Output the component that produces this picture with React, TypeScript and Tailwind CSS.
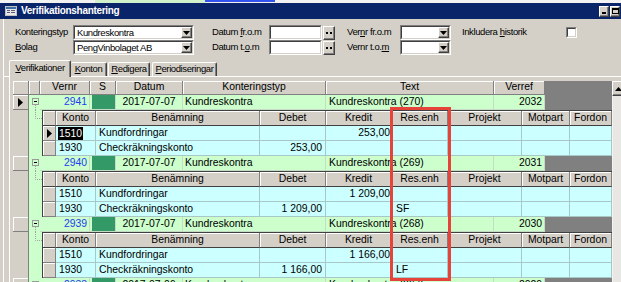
import React from "react";

type SubRow = { konto: string; ben: string; debet: string; kredit: string; res: string };
type Block = { vernr: string; datum: string; typ: string; text: string; verref: string; rows: SubRow[]; sel?: boolean };

const blocks: Block[] = [
  {
    vernr: "2941", datum: "2017-07-07", typ: "Kundreskontra", text: "Kundreskontra (270)", verref: "2032", sel: true,
    rows: [
      { konto: "1510", ben: "Kundfordringar", debet: "", kredit: "253,00", res: "" },
      { konto: "1930", ben: "Checkräkningskonto", debet: "253,00", kredit: "", res: "" },
    ],
  },
  {
    vernr: "2940", datum: "2017-07-07", typ: "Kundreskontra", text: "Kundreskontra (269)", verref: "2031",
    rows: [
      { konto: "1510", ben: "Kundfordringar", debet: "", kredit: "1 209,00", res: "" },
      { konto: "1930", ben: "Checkräkningskonto", debet: "1 209,00", kredit: "", res: "SF" },
    ],
  },
  {
    vernr: "2939", datum: "2017-07-07", typ: "Kundreskontra", text: "Kundreskontra (268)", verref: "2030",
    rows: [
      { konto: "1510", ben: "Kundfordringar", debet: "", kredit: "1 166,00", res: "" },
      { konto: "1930", ben: "Checkräkningskonto", debet: "1 166,00", kredit: "", res: "LF" },
    ],
  },
  {
    vernr: "2938", datum: "2017-07-06", typ: "Kundreskontra", text: "Kundreskontra (267)", verref: "2029",
    rows: [
      { konto: "1510", ben: "Kundfordringar", debet: "", kredit: "980,00", res: "" },
      { konto: "1930", ben: "Checkräkningskonto", debet: "980,00", kredit: "", res: "" },
    ],
  },
];

const raised =
  "bg-[#d4d0c8] border border-t-white border-l-white border-b-[#404040] border-r-[#404040] shadow-[inset_-1px_-1px_0_#808080]";
const hdr =
  "shrink-0 h-full flex items-center bg-[#d4d0c8] border-r border-b border-[#808080] shadow-[inset_1px_1px_0_#ffffff] overflow-hidden whitespace-nowrap";
const selCell =
  "shrink-0 h-full flex items-center bg-[#d4d0c8] border-r border-b border-[#808080] shadow-[inset_1px_1px_0_#ffffff]";
const cellG =
  "shrink-0 h-full flex items-center bg-[#ccffcc] border-r border-b border-[#c4dcc4] overflow-hidden whitespace-nowrap";
const cellC =
  "shrink-0 h-full flex items-center bg-[#ccffff] border-r border-b border-[#a8c8c8] overflow-hidden whitespace-nowrap";

function DownArrow() {
  return (
    <svg width="7" height="4" viewBox="0 0 7 4">
      <path d="M0 0h7L3.5 4z" fill="#000" />
    </svg>
  );
}

function RightArrow() {
  return (
    <svg width="5" height="9" viewBox="0 0 5 9">
      <path d="M0 0L5 4.5L0 9z" fill="#000" />
    </svg>
  );
}

function Combo({ w, text }: { w: string; text?: string }) {
  return (
    <div className={`${w} shrink-0 h-[15px] flex border border-t-[#808080] border-l-[#808080] border-b-white border-r-white`}>
      <div className="flex-1 min-w-0 flex items-center bg-white border border-t-[#404040] border-l-[#404040] border-b-[#d4d0c8] border-r-[#d4d0c8]">
        <span className="pl-[2px] flex-1 min-w-0 whitespace-nowrap overflow-hidden leading-[11px] h-[11px]">{text}</span>
        <div className={`w-[11px] h-[11px] shrink-0 flex items-center justify-center ${raised}`}>
          <DownArrow />
        </div>
      </div>
    </div>
  );
}

function DateInput() {
  return (
    <div className="flex items-center shrink-0">
      <div className="w-[53px] h-[15px] flex border border-t-[#808080] border-l-[#808080] border-b-white border-r-white">
        <div className="flex-1 bg-white border border-t-[#404040] border-l-[#404040] border-b-[#d4d0c8] border-r-[#d4d0c8]" />
      </div>
      <div className={`ml-[1px] w-[12px] h-[14px] flex items-center justify-center ${raised}`}>
        <svg width="6" height="2" viewBox="0 0 6 2">
          <rect x="0" y="0" width="2" height="2" fill="#000" />
          <rect x="4" y="0" width="2" height="2" fill="#000" />
        </svg>
      </div>
    </div>
  );
}

function Checkbox() {
  return (
    <div className="w-[11px] h-[11px] shrink-0 border border-t-[#808080] border-l-[#808080] border-b-white border-r-white">
      <div className="w-full h-full bg-white border border-t-[#404040] border-l-[#404040] border-b-[#d4d0c8] border-r-[#d4d0c8]" />
    </div>
  );
}

const mainW = ["w-[50px]", "w-[26px]", "w-[67px]", "w-[143px]", "w-[168px]", "w-[51px]"];
const mainHeads = ["Vernr", "S", "Datum", "Konteringstyp", "Text", "Verref"];
const subW = ["w-[40px]", "w-[164px]", "w-[66px]", "w-[66px]", "w-[56px]", "w-[74px]", "w-[48px]", "flex-1"];
const subHeads = ["Konto", "Benämning", "Debet", "Kredit", "Res.enh", "Projekt", "Motpart", "Fordon"];

function BlockView({ b }: { b: Block }) {
  return (
    <div className="flex flex-col">
      {/* main row */}
      <div className="flex h-[15px]">
        <div className={`w-[16px] justify-center ${selCell}`}>{b.sel && <RightArrow />}</div>
        <div className="w-[11px] shrink-0 h-full bg-[#ccffcc]">
          <svg width="11" height="15" viewBox="0 0 11 15">
            <rect x="3.5" y="3.5" width="6" height="6" fill="none" stroke="#9a9a9a" />
            <path d="M5 6.5h3" stroke="#000" />
            <path d="M6.5 10v5" stroke="#a0a0a0" strokeDasharray="1 1" />
          </svg>
        </div>
        <div className={`${mainW[0]} ${cellG} justify-end pr-[2px] text-[#1e3cf0]`}>{b.vernr}</div>
        <div className={`${mainW[1]} ${cellG} pl-[2px]`}>
          <div className="w-full h-[14px] bg-[#339966]" />
        </div>
        <div className={`${mainW[2]} ${cellG} justify-center`}>{b.datum}</div>
        <div className={`${mainW[3]} ${cellG} pl-[2px]`}>{b.typ}</div>
        <div className={`${mainW[4]} ${cellG} pl-[3px]`}>{b.text}</div>
        <div className={`${mainW[5]} ${cellG} justify-end pr-[2px]`}>{b.verref}</div>
        <div className="flex-1 bg-[#808080]" />
      </div>
      {/* sub area */}
      <div className="flex h-[46px]">
        <div className="w-[16px] shrink-0 bg-[#d4d0c8] border-r border-[#808080]" />
        <div className="w-[13px] shrink-0 bg-[#ccffcc]">
          <svg width="13" height="46" viewBox="0 0 13 46">
            <path d="M6.5 0v8.5H13" fill="none" stroke="#a0a0a0" strokeDasharray="1 1" />
          </svg>
        </div>
        <div className="w-[570px] shrink-0 flex flex-col border-l border-t border-[#404040]">
          <div className="flex h-[15px]">
            <div className={`w-[13px] ${hdr} border-b-[#404040]`} />
            {subHeads.map((h, i) => (
              <div key={h} className={`${subW[i]} ${hdr} border-b-[#404040] justify-center`}>{h}</div>
            ))}
          </div>
          {b.rows.map((r, ri) => (
            <div key={ri} className="flex h-[15px]">
              <div className={`w-[13px] justify-center ${selCell}`}>{b.sel && ri === 0 && <RightArrow />}</div>
              <div className={`${subW[0]} ${cellC} pl-[2px]`}>
                {b.sel && ri === 0 ? (
                  <span className="bg-black text-white px-[1px] leading-[13px]">{r.konto}</span>
                ) : (
                  <span className="pl-[1px]">{r.konto}</span>
                )}
              </div>
              <div className={`${subW[1]} ${cellC} pl-[3px]`}>{r.ben}</div>
              <div className={`${subW[2]} ${cellC} justify-end pr-[3px]`}>{r.debet}</div>
              <div className={`${subW[3]} ${cellC} justify-end pr-[1px]`}>{r.kredit}</div>
              <div className={`${subW[4]} ${cellC} pl-[4px]`}>{r.res}</div>
              <div className={`${subW[5]} ${cellC}`} />
              <div className={`${subW[6]} ${cellC}`} />
              <div className={`${subW[7]} ${cellC}`} />
            </div>
          ))}
        </div>
      </div>
    </div>
  );
}

export default function App() {
  return (
    <div className="w-[621px] h-[282px] overflow-hidden relative bg-[#d4d0c8] font-['Liberation_Sans',Arial,sans-serif] text-black select-none">
      {/* background strip above window */}
      <div className="h-[3px] flex">
        <div className="w-[95px] bg-[#f2f2f2]" />
        <div className="w-[110px] bg-[#d2f2cc]" />
        <div className="w-[70px] bg-[#f2f2f2] border-t-2 border-[#3355ee]" />
        <div className="flex-1 bg-[#f2f2f2]" />
      </div>
      {/* title bar */}
      <div className="h-[16px] bg-[#0a246a] flex items-center">
        <div className="ml-[5px] w-[12px] h-[10px] shrink-0">
          <svg width="12" height="10" viewBox="0 0 12 10">
            <rect x="0.5" y="0.5" width="11" height="9" fill="#e8e8e8" stroke="#c0c0c0" />
            <rect x="1" y="1" width="10" height="2" fill="#3a6ea5" />
            <rect x="2" y="4" width="3" height="1" fill="#5a5a7a" />
            <rect x="6" y="4" width="4" height="1" fill="#5a5a7a" />
            <rect x="2" y="6" width="3" height="1" fill="#5a5a7a" />
            <rect x="6" y="6" width="4" height="1" fill="#5a5a7a" />
          </svg>
        </div>
        <span className="ml-[4px] text-white font-bold text-[10px] tracking-[-0.3px] leading-none">Verifikationshantering</span>
        <div className="ml-auto flex mr-[1px]">
          <div className={`w-[10px] h-[11px] flex items-end justify-center pb-[2px] ${raised}`}>
            <div className="w-[4px] h-[2px] bg-black" />
          </div>
          <div className={`ml-[1px] w-[10px] h-[11px] flex items-center justify-center ${raised}`}>
            <div className="w-[7px] h-[6px] border border-black border-t-2" />
          </div>
        </div>
      </div>
      {/* body */}
      <div className="ml-[3px] border-l border-white h-[263px] flex flex-col">
        {/* form */}
        <div className="pt-[6px] flex flex-col text-[9.5px] tracking-[-0.4px]">
          <div className="h-[15px] flex items-center">
            <span className="ml-[11px] w-[58px] shrink-0">Konteringstyp</span>
            <Combo w="w-[121px]" text="Kundreskontra" />
            <span className="ml-[18px] w-[57px] shrink-0">Datum <u>f</u>r.o.m</span>
            <DateInput />
            <span className="ml-[12px] w-[53px] shrink-0">Ver<u>n</u>r fr.o.m</span>
            <Combo w="w-[51px]" />
            <span className="ml-[11px] w-[104px] shrink-0">Inkludera <u>h</u>istorik</span>
            <Checkbox />
          </div>
          <div className="h-[15px] flex items-center">
            <span className="ml-[11px] w-[58px] shrink-0"><u>B</u>olag</span>
            <Combo w="w-[121px]" text="PengVinbolaget AB" />
            <span className="ml-[18px] w-[57px] shrink-0">Datum t.<u>o</u>.m</span>
            <DateInput />
            <span className="ml-[12px] w-[53px] shrink-0">Vernr t.o.<u>m</u></span>
            <Combo w="w-[51px]" />
          </div>
        </div>
        {/* tabs */}
        <div className="mt-[5px] h-[17px] flex items-end pl-[5px] border-b border-white text-[9.5px] tracking-[-0.4px]">
          <div className="relative z-10 -mb-px w-[62px] h-[17px] flex items-center justify-center bg-[#d4d0c8] border-l border-t border-white border-r border-r-[#404040] rounded-t-[2px] shadow-[inset_-1px_0_0_#808080] pb-[1px]">
            <span><u>V</u>erifikationer</span>
          </div>
          <div className="w-[36px] h-[14px] flex items-center justify-center border-t border-white border-r border-r-[#404040] rounded-t-[2px] shadow-[inset_-1px_0_0_#808080]">
            <span><u>K</u>onton</span>
          </div>
          <div className="ml-[1px] w-[42px] h-[14px] flex items-center justify-center border-l border-t border-white border-r border-r-[#404040] rounded-t-[2px] shadow-[inset_-1px_0_0_#808080]">
            <span><u>R</u>edigera</span>
          </div>
          <div className="ml-[2px] w-[65px] h-[14px] flex items-center justify-center border-l border-t border-white border-r border-r-[#404040] rounded-t-[2px] shadow-[inset_-1px_0_0_#808080]">
            <span><u>P</u>eriodiseringar</span>
          </div>
        </div>
        {/* tab panel */}
        <div className="ml-[5px] border-l border-white pt-[4px] pl-[3px] flex-1 min-h-0">
          <div className="flex h-full text-[10.4px] leading-none">
            <div className="w-[599px] shrink-0 flex flex-col bg-[#808080]">
              <div className="flex h-[14px] shrink-0">
                <div className={`w-[16px] ${hdr}`} />
                <div className={`w-[11px] ${hdr}`} />
                {mainHeads.map((h, i) => (
                  <div key={h} className={`${mainW[i]} ${hdr} justify-center`}>{h}</div>
                ))}
                <div className="flex-1 bg-[#808080]" />
              </div>
              {blocks.map((b) => (
                <BlockView key={b.vernr} b={b} />
              ))}
            </div>
            <div className="w-[16px] shrink-0 flex flex-col">
              <div className={`h-[15px] shrink-0 flex items-center pl-[2px] ${raised}`}>
                <svg width="7" height="4" viewBox="0 0 7 4">
                  <path d="M3.5 0L7 4H0z" fill="#000" />
                </svg>
              </div>
              <div className="flex-1 bg-[#e9e7e3] border-l border-[#f4f3f0]" />
            </div>
          </div>
        </div>
      </div>
      {/* red highlight annotation */}
      <div className="absolute left-[390px] top-[107px] w-[61px] h-[174px] border-[3px] border-[#e6433b]" />
    </div>
  );
}
